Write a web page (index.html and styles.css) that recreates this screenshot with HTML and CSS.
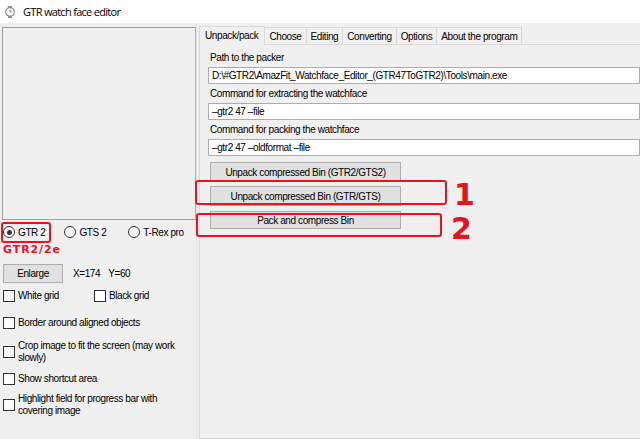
FILE: index.html
```html
<!DOCTYPE html>
<html lang="en">
<head>
    <meta charset="UTF-8">
    <title>GTR watch face editor</title>
    <link rel="stylesheet" href="styles.css">
</head>
<body>

<div class="window">
    <div class="titlebar">
        <svg class="app-icon" width="10" height="12" viewBox="0 0 10 12">
            <rect x="3" y="0" width="4" height="2" fill="#9a9a9a"/>
            <rect x="3" y="10" width="4" height="2" fill="#9a9a9a"/>
            <circle cx="5" cy="6" r="4.3" fill="#fff" stroke="#8a8a8a" stroke-width="1.2"/>
            <path d="M5 3.6 V6 H6.8" fill="none" stroke="#777" stroke-width="1"/>
        </svg>
        <span>GTR watch face editor</span>
    </div>

    <div class="client">
        <div class="left">
            <div class="preview"></div>

            <div class="models">
                <label class="radio model-gtr"><span class="dot checked"></span>GTR 2</label>
                <label class="radio model-gts"><span class="dot"></span>GTS 2</label>
                <label class="radio model-trex"><span class="dot"></span>T-Rex pro</label>
                <div class="mark mark-model"></div>
            </div>
            <div class="model-note">GTR2/2e</div>

            <div class="enlarge-row">
                <button class="btn btn-enlarge">Enlarge</button>
                <span class="coord">X=174</span>
                <span class="coord">Y=60</span>
            </div>

            <div class="grid-row">
                <label class="check check-white"><span class="box"></span>White grid</label>
                <label class="check"><span class="box"></span>Black grid</label>
            </div>

            <label class="check check-border"><span class="box"></span>Border around aligned objects</label>
            <label class="check check-crop"><span class="box"></span>Crop image to fit the screen (may work slowly)</label>
            <label class="check check-shortcut"><span class="box"></span>Show shortcut area</label>
            <label class="check check-highlight"><span class="box"></span>Highlight field for progress bar with covering image</label>
        </div>

        <div class="tabs">
            <div class="tab-strip">
                <div class="tab active">Unpack/pack</div>
                <div class="tab">Choose</div>
                <div class="tab">Editing</div>
                <div class="tab">Converting</div>
                <div class="tab">Options</div>
                <div class="tab">About the program</div>
            </div>
            <div class="tab-page">
                <div class="field-label">Path to the packer</div>
                <div class="textbox">D:\#GTR2\AmazFit_Watchface_Editor_(GTR47ToGTR2)\Tools\main.exe</div>

                <div class="field-label">Command for extracting the watchface</div>
                <div class="textbox">–gtr2 47 –file</div>

                <div class="field-label">Command for packing the watchface</div>
                <div class="textbox">–gtr2 47 –oldformat –file</div>

                <button class="btn btn-wide btn-first">Unpack compressed Bin (GTR2/GTS2)</button>
                <div class="annotated">
                    <button class="btn btn-wide btn-second">Unpack compressed Bin (GTR/GTS)</button>
                    <div class="mark mark-one"></div>
                    <span class="step step-one">1</span>
                </div>
                <div class="annotated">
                    <button class="btn btn-wide btn-third">Pack and compress Bin</button>
                    <div class="mark mark-two"></div>
                    <span class="step step-two">2</span>
                </div>
            </div>
        </div>
    </div>
</div>

</body>
</html>
```

FILE: styles.css
```css
body {
    margin: 0;
    padding: 0;
    font-family: "Liberation Sans", Arial, sans-serif;
    font-size: 10px;
    letter-spacing: -0.4px;
    color: #000;
    background-color: #f0f0f0;
    overflow: hidden;
}

.window {
    width: 640px;
    height: 439px;
    background-color: #f0f0f0;
}

.titlebar {
    height: 23px;
    background-color: #fff;
    display: flex;
    align-items: center;
    font-family: "Open Sans", sans-serif;
    font-size: 11px;
    letter-spacing: -0.7px;
    color: #000;
}

.app-icon {
    margin: 0 8px 0 5px;
}

.client {
    display: flex;
    height: 416px;
}

/* left side */
.left {
    width: 197px;
    padding-left: 2px;
    padding-top: 4px;
    box-sizing: border-box;
    border-right: 1px solid #e3e3e3;
}

.preview {
    width: 192px;
    height: 191px;
    border: 1px solid #a0a0a0;
    border-right-color: #b4b4b4;
    background-color: #f0f0f0;
}

.models {
    position: relative;
    display: flex;
    align-items: center;
    height: 14px;
    margin-top: 5px;
}

.radio {
    display: flex;
    align-items: center;
}

.dot {
    width: 12px;
    height: 12px;
    border: 1px solid #333;
    border-radius: 50%;
    background-color: #fff;
    margin-right: 3px;
    box-sizing: border-box;
    position: relative;
}

.dot.checked::after {
    content: "";
    position: absolute;
    left: 2.5px;
    top: 2.5px;
    width: 5px;
    height: 5px;
    border-radius: 50%;
    background-color: #333;
}

.model-gtr {
    margin-left: 1px;
}

.model-gts {
    margin-left: 19px;
}

.model-trex {
    margin-left: 22px;
}

.mark {
    position: absolute;
    border: 2px solid #e8141c;
    border-radius: 3px;
}

.mark-model {
    left: -1px;
    top: -3px;
    width: 46px;
    height: 17px;
}

.model-note {
    margin: 5px 0 0 1px;
    color: #e8141c;
    font-family: "DejaVu Sans", sans-serif;
    font-weight: bold;
    font-size: 11px;
    letter-spacing: 0.9px;
    height: 12px;
    line-height: 12px;
}

.enlarge-row {
    display: flex;
    align-items: center;
    margin-top: 8px;
    margin-left: 1px;
}

.btn {
    font-family: "Liberation Sans", Arial, sans-serif;
    font-size: 10px;
    letter-spacing: -0.4px;
    color: #000;
    background-color: #e1e1e1;
    border: 1px solid #adadad;
    padding: 0;
    height: 20px;
    box-sizing: border-box;
    white-space: nowrap;
}

.btn-enlarge {
    width: 60px;
    height: 19px;
    margin-right: 10px;
}

.coord {
    margin-right: 8px;
}

.grid-row {
    display: flex;
    margin-top: 7px;
}

.check {
    display: flex;
    align-items: flex-start;
    line-height: 12px;
    margin-left: 1px;
}

.box {
    flex: none;
    width: 12px;
    height: 12px;
    border: 1px solid #333;
    background-color: #fff;
    margin-right: 3px;
    box-sizing: border-box;
    margin-top: 0;
}

.check-white {
    width: 90px;
}

.check-border {
    margin-top: 15px;
}

.check-crop {
    margin-top: 11px;
    width: 175px;
    align-items: center;
}

.check-shortcut {
    margin-top: 9px;
}

.check-highlight {
    margin-top: 8px;
    width: 160px;
    align-items: center;
}

/* right side */
.tabs {
    flex: 1;
    display: flex;
    flex-direction: column;
    padding-left: 2px;
    padding-top: 2px;
}

.tab-strip {
    display: flex;
    align-items: flex-end;
    height: 19px;
}

.tab {
    height: 16px;
    line-height: 17px;
    padding: 0 4px;
    border: 1px solid #d9d9d9;
    border-bottom: none;
    margin-left: -1px;
    background-color: #f0f0f0;
}

.tab.active {
    height: 18px;
    line-height: 18px;
    padding: 0 6px 0 5px;
    margin-left: 0;
    position: relative;
    z-index: 1;
    margin-bottom: -1px;
    border-color: #d9d9d9;
}

.tab-page {
    flex: 1;
    border: 1px solid #d9d9d9;
    border-right: none;
    padding: 5px 0 0 8px;
    background-color: #f0f0f0;
}

.field-label {
    height: 16px;
    line-height: 16px;
    padding-left: 2px;
}

.field-label + .textbox {
    margin-top: 1px;
}

.textbox {
    height: 17px;
    line-height: 15px;
    border: 1px solid #adadad;
    background-color: #fff;
    padding-left: 3px;
    box-sizing: border-box;
    white-space: nowrap;
    overflow: hidden;
    margin-bottom: 2px;
}

.btn-wide {
    display: block;
    width: 191px;
    margin-left: 2px;
}

.btn-first {
    margin-top: 6px;
}

.btn-second {
    margin-top: 4px;
}

.btn-third {
    margin-top: 5px;
    height: 18px;
}

.annotated {
    position: relative;
}

.mark-one {
    left: -13px;
    top: -6px;
    width: 248px;
    height: 21px;
}

.mark-two {
    left: -12px;
    top: 2px;
    width: 242px;
    height: 20px;
}

.step {
    position: absolute;
    color: #e8141c;
    font-family: "DejaVu Sans", sans-serif;
    font-weight: bold;
    font-size: 30px;
    line-height: 30px;
    letter-spacing: 0;
}

.step-one {
    left: 246px;
    top: -6px;
}

.step-two {
    left: 243px;
    top: 3px;
}
```
